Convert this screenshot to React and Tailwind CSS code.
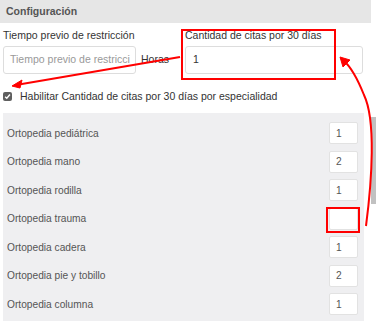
import React from "react";

const rows = [
  ["Ortopedia pediátrica", "1"],
  ["Ortopedia mano", "2"],
  ["Ortopedia rodilla", "1"],
  ["Ortopedia trauma", ""],
  ["Ortopedia cadera", "1"],
  ["Ortopedia pie y tobillo", "2"],
  ["Ortopedia columna", "1"],
];

export default function App() {
  return (
    <div
      className="relative w-[376px] h-[321px] overflow-hidden bg-white"
      style={{ fontFamily: '"Liberation Sans", Arial, sans-serif' }}
    >
      <div className="h-[23px] w-[371px] bg-[#e6e6e6] pl-[6px] flex items-center text-[10.5px] font-bold text-[#555]">
        Configuración
      </div>

      <div className="flex pl-[3px] pt-[5px]">
        <div className="flex flex-col w-[133px]">
          <div className="h-[15px] text-[10.5px] leading-[15px] text-[#333] whitespace-nowrap">Tiempo previo de restricción</div>
          <div className="mt-[3px] h-[28px] border border-[#ddd] rounded-[3px] bg-white flex items-center pl-[6px] text-[10.5px] text-[#999] whitespace-nowrap overflow-hidden">
            Tiempo previo de restricci
          </div>
        </div>
        <div className="w-[49px] pt-[18px] pl-[5px] flex items-center h-[46px] text-[10.5px] text-[#333]">Horas</div>
        <div className="flex flex-col w-[178px]">
          <div className="h-[15px] text-[10.5px] leading-[15px] text-[#333] whitespace-nowrap">Cantidad de citas por 30 días</div>
          <div className="mt-[3px] h-[28px] border border-[#ddd] rounded-[3px] bg-white flex items-center pl-[7px] text-[10.5px] text-[#333]">
            1
          </div>
        </div>
      </div>

      <div className="flex items-center pl-[3px] mt-[15.5px] h-[14px]">
        <div className="w-[9px] h-[9px] rounded-[2px] bg-[#5f5f5f] flex items-center justify-center">
          <svg width="7" height="7" viewBox="0 0 8 8">
            <path d="M1.3 4.2 L3.2 6 L6.8 1.8" stroke="white" strokeWidth="1.6" fill="none" />
          </svg>
        </div>
        <span className="ml-[8px] text-[10.5px] text-[#333]">Habilitar Cantidad de citas por 30 días por especialidad</span>
      </div>

      <div className="ml-[3px] mt-[9.5px] w-[361px] h-[220px] bg-[#efeff1] pt-[6px]">
        {rows.map(([name, val]) => (
          <div key={name} className="flex items-center justify-between h-[28.5px] pl-[4px] pr-[6px]">
            <span className="text-[10.2px] text-[#555]">{name}</span>
            <div className="w-[29px] h-[22px] bg-white border border-[#e2e2e2] rounded-[2px] flex items-center pl-[6px] text-[10.2px] text-[#555]">
              {val}
            </div>
          </div>
        ))}
      </div>

      {/* scrollbar */}
      <div className="absolute left-[371px] top-[117px] w-[5px] h-[87px] bg-[#c1c1c1]" />

      {/* annotations */}
      <div className="absolute left-[181px] top-[29px] w-[155px] h-[51px] border-2 border-[#ff0000]" />
      <div className="absolute left-[326px] top-[207px] w-[34px] h-[26px] border-2 border-[#ff0000]" />
      <svg className="absolute left-0 top-0" width="376" height="321" viewBox="0 0 376 321">
        <line x1="180" y1="57" x2="16" y2="85" stroke="#ff0000" strokeWidth="2" />
        <path d="M12 86 L22 80 L20 88 Z" fill="#ff0000" stroke="#ff0000" strokeWidth="1" />
        <path d="M366 226 C 372 180, 376 120, 364 95 C 358 80, 352 68, 344 61" stroke="#ff0000" strokeWidth="2" fill="none" />
        <path d="M340 57 L350 60 L343 67 Z" fill="#ff0000" stroke="#ff0000" strokeWidth="1" />
      </svg>
    </div>
  );
}
